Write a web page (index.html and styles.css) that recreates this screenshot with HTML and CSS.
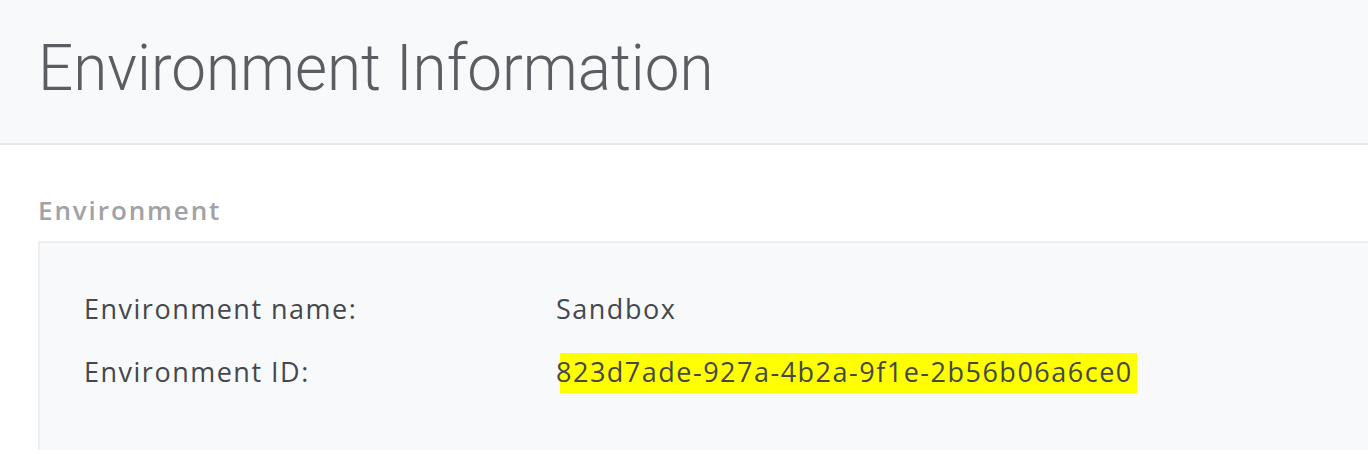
FILE: index.html
```html
<!DOCTYPE html>
<html>
<head>
<meta charset="utf-8">
<link rel="stylesheet" href="styles.css">
</head>
<body>
<header class="page-header">
  <h1 class="page-title">Environment Information</h1>
</header>
<main class="content">
  <h2 class="section-title">Environment</h2>
  <section class="panel">
    <div class="row">
      <span class="label">Environment name:</span>
      <span class="value">Sandbox</span>
    </div>
    <div class="row">
      <span class="label">Environment ID:</span>
      <span class="value"><mark class="hl">823d7ade-927a-4b2a-9f1e-2b56b06a6ce0</mark></span>
    </div>
  </section>
</main>
</body>
</html>
```

FILE: styles.css
```css
html, body {
  margin: 0;
  padding: 0;
  background: #ffffff;
  overflow: hidden;
}
body {
  width: 1368px;
  height: 454px;
  font-family: "Open Sans", "Liberation Sans", sans-serif;
}
.page-header {
  box-sizing: border-box;
  height: 145px;
  background: #f8f9fb;
  border-bottom: 2px solid #e6e8eb;
  padding: 28px 0 0 38px;
}
.page-title {
  margin: 0;
  font-family: "Roboto", sans-serif;
  font-weight: 300;
  font-size: 65px;
  line-height: 80px;
  color: #5a5e62;
  white-space: nowrap;
  transform: scaleX(0.953);
  transform-origin: left center;
}
.content {
  padding: 50px 0 0 38px;
}
.section-title {
  margin: 0 0 16px 0;
  font-size: 26px;
  font-weight: 600;
  letter-spacing: 1.9px;
  color: #a0a2a5;
  line-height: 30px;
}
.panel {
  background: #f8f9fb;
  border: 2px solid #eceef0;
  border-right: none;
  border-bottom: none;
  padding: 34px 0 47px 44px;
}
.row {
  display: flex;
  align-items: center;
  height: 63px;
  font-size: 27px;
  letter-spacing: 1.5px;
  color: #45484b;
}
.label {
  width: 472px;
  flex: none;
}
.value {
  color: #45484b;
}
.hl {
  display: inline-block;
  background: linear-gradient(#ffff00, #ffff00) 4px 2px / 100% 100% no-repeat;
  color: #45484b;
  line-height: 42px;
  padding-right: 4px;
}
```
